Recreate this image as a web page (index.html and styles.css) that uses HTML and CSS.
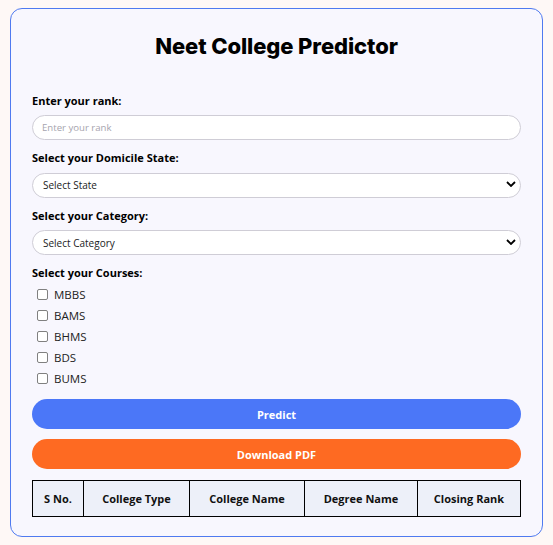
FILE: index.html
```html
<!DOCTYPE html>
<html>
<head>
<meta charset="utf-8">
<link rel="stylesheet" href="styles.css">
</head>
<body>
<div class="card">
  <h1 class="title">Neet College Predictor</h1>
  <form class="form">
    <label class="label">Enter your rank:</label>
    <input class="field" type="text" placeholder="Enter your rank">
    <label class="label">Select your Domicile State:</label>
    <div class="select-wrap">
      <select class="field select"><option>Select State</option></select>
      <svg class="chev" viewBox="0 0 10 6" width="10" height="6"><path d="M1 1l4 4 4-4" fill="none" stroke="#000" stroke-width="1.8"/></svg>
    </div>
    <label class="label">Select your Category:</label>
    <div class="select-wrap">
      <select class="field select"><option>Select Category</option></select>
      <svg class="chev" viewBox="0 0 10 6" width="10" height="6"><path d="M1 1l4 4 4-4" fill="none" stroke="#000" stroke-width="1.8"/></svg>
    </div>
    <label class="label">Select your Courses:</label>
    <div class="checks">
      <label class="check"><span class="box"></span>MBBS</label>
      <label class="check"><span class="box"></span>BAMS</label>
      <label class="check"><span class="box"></span>BHMS</label>
      <label class="check"><span class="box"></span>BDS</label>
      <label class="check"><span class="box"></span>BUMS</label>
    </div>
    <button type="button" class="btn btn-blue">Predict</button>
    <button type="button" class="btn btn-orange">Download PDF</button>
  </form>
  <table class="table">
    <thead>
      <tr>
        <th class="c1">S No.</th>
        <th class="c2">College Type</th>
        <th class="c3">College Name</th>
        <th class="c4">Degree Name</th>
        <th class="c5">Closing Rank</th>
      </tr>
    </thead>
  </table>
</div>
</body>
</html>
```
FILE: styles.css
```css
html, body {
  margin: 0;
  padding: 0;
  background: #fef8f6;
}
body {
  padding: 8px 10px;
  font-family: "Open Sans", "Liberation Sans", sans-serif;
  color: #000;
}
.card {
  width: 533px;
  height: 529px;
  box-sizing: border-box;
  border: 1px solid #4f7af0;
  border-radius: 12px;
  background: #f8f7fe;
  padding: 24px 21px 0 21px;
}
.title {
  margin: 0;
  text-align: center;
  font-family: "Inter", "Liberation Sans", sans-serif;
  font-weight: 800;
  font-size: 22px;
  letter-spacing: -0.1px;
  line-height: 26px;
  height: 26px;
}
.form {
  display: flex;
  flex-direction: column;
  margin-top: 34px;
}
.label {
  font-size: 11px;
  font-weight: 700;
  line-height: 15px;
  margin-bottom: 7px;
}
.field {
  box-sizing: border-box;
  width: 489px;
  height: 25px;
  border: 1px solid #cfcdd6;
  border-radius: 13px;
  background: #fff;
  font-family: "Open Sans", "Liberation Sans", sans-serif;
  font-size: 9.6px;
  padding: 0 9px;
  margin: 0 0 10px 0;
  outline: none;
  color: #222;
}
.field::placeholder {
  color: #a6a4ae;
}
.select-wrap {
  position: relative;
}
.select {
  appearance: none;
  -webkit-appearance: none;
  font-size: 10px;
  padding: 0 10px;
  margin-bottom: 10px;
}
.chev {
  position: absolute;
  right: 5px;
  top: 9px;
}
.checks {
  display: flex;
  flex-direction: column;
  gap: 6px;
  padding-left: 5px;
  margin-bottom: 13px;
}
.check {
  display: flex;
  align-items: center;
  gap: 6px;
  font-size: 11.5px;
  line-height: 15px;
  color: #222;
}
.box {
  width: 9px;
  height: 9px;
  border: 1px solid #808080;
  border-radius: 2px;
  background: #fff;
}
.btn {
  width: 489px;
  height: 30px;
  border: none;
  border-radius: 15px;
  color: #fff;
  font-family: "Open Sans", "Liberation Sans", sans-serif;
  font-weight: 700;
  font-size: 11px;
  margin-bottom: 10px;
  padding: 0;
}
.btn-blue { background: #4b77f8; }
.btn-orange { background: #fe6a22; }
.table {
  width: 489px;
  border-collapse: collapse;
  table-layout: fixed;
  margin-top: 1px;
}
.table th {
  border: 1px solid #000;
  background: #edf0f9;
  height: 35px;
  padding: 0;
  font-size: 11px;
  font-weight: 700;
  color: #111;
}
.c1 { width: 50px; }
.c2 { width: 105px; }
.c3 { width: 114px; }
.c4 { width: 112px; }
```
